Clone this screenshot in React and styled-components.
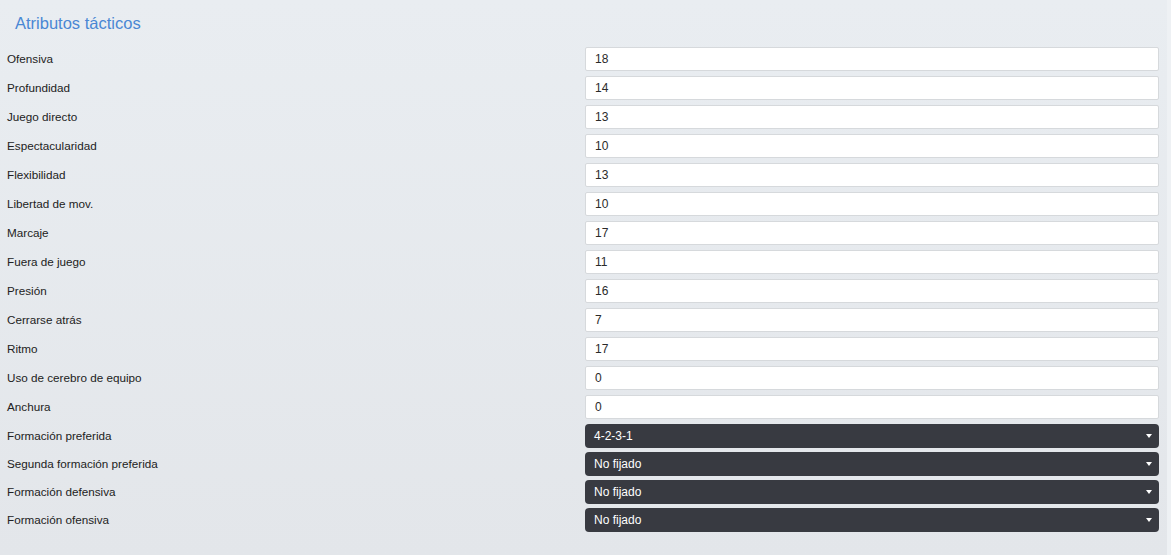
import React from "react";
import styled, { createGlobalStyle } from "styled-components";

const Global = createGlobalStyle`
  html, body { margin: 0; padding: 0; }
  body {
    background: #eef1f4;
    font-family: "Liberation Sans", Arial, sans-serif;
  }
`;

const Panel = styled.section`
  width: 1167px;
  min-height: 555px;
  box-sizing: border-box;
  padding: 13px 8px 20px 7px;
  background: linear-gradient(180deg, #e9edf1 0%, #e3e6ea 100%);
`;

const Title = styled.h2`
  margin: 0 0 14px 8px;
  font-size: 16.5px;
  line-height: 20px;
  font-weight: normal;
  color: #4a87d4;
`;

const Rows = styled.div`
  display: flex;
  flex-direction: column;
  gap: ${(p) => p.$gap}px;
`;

const Row = styled.div`
  display: grid;
  grid-template-columns: 578px 1fr;
  align-items: center;
  height: 24px;
`;

const Label = styled.label`
  font-size: 11.7px;
  line-height: 14px;
  margin-bottom: 1px;
  color: #222;
`;

const Input = styled.div`
  box-sizing: border-box;
  height: 24px;
  background: #fff;
  border: 1px solid #d6d9dc;
  border-radius: 2px;
  padding-left: 9px;
  display: flex;
  align-items: center;
  font-size: 12px;
  color: #2a2a2a;
`;

const Select = styled.div`
  box-sizing: border-box;
  height: 24px;
  background: #383a41;
  border-radius: 4px;
  padding: 0 9px;
  display: flex;
  align-items: center;
  justify-content: space-between;
  font-size: 12px;
  color: #fff;
`;

const Caret = styled.span`
  width: 0;
  height: 0;
  margin-right: -2px;
  border-left: 3.5px solid transparent;
  border-right: 3.5px solid transparent;
  border-top: 4px solid #fff;
`;

const numbers = [
  ["Ofensiva", "18"],
  ["Profundidad", "14"],
  ["Juego directo", "13"],
  ["Espectacularidad", "10"],
  ["Flexibilidad", "13"],
  ["Libertad de mov.", "10"],
  ["Marcaje", "17"],
  ["Fuera de juego", "11"],
  ["Presión", "16"],
  ["Cerrarse atrás", "7"],
  ["Ritmo", "17"],
  ["Uso de cerebro de equipo", "0"],
  ["Anchura", "0"],
];

const selects = [
  ["Formación preferida", "4-2-3-1"],
  ["Segunda formación preferida", "No fijado"],
  ["Formación defensiva", "No fijado"],
  ["Formación ofensiva", "No fijado"],
];

export default function App() {
  return (
    <>
      <Global />
      <Panel>
        <Title>Atributos tácticos</Title>
        <Rows $gap={5}>
          {numbers.map(([l, v]) => (
            <Row key={l}>
              <Label>{l}</Label>
              <Input>{v}</Input>
            </Row>
          ))}
        </Rows>
        <Rows $gap={4} style={{ marginTop: 5 }}>
          {selects.map(([l, v]) => (
            <Row key={l}>
              <Label>{l}</Label>
              <Select>
                <span>{v}</span>
                <Caret />
              </Select>
            </Row>
          ))}
        </Rows>
      </Panel>
    </>
  );
}
